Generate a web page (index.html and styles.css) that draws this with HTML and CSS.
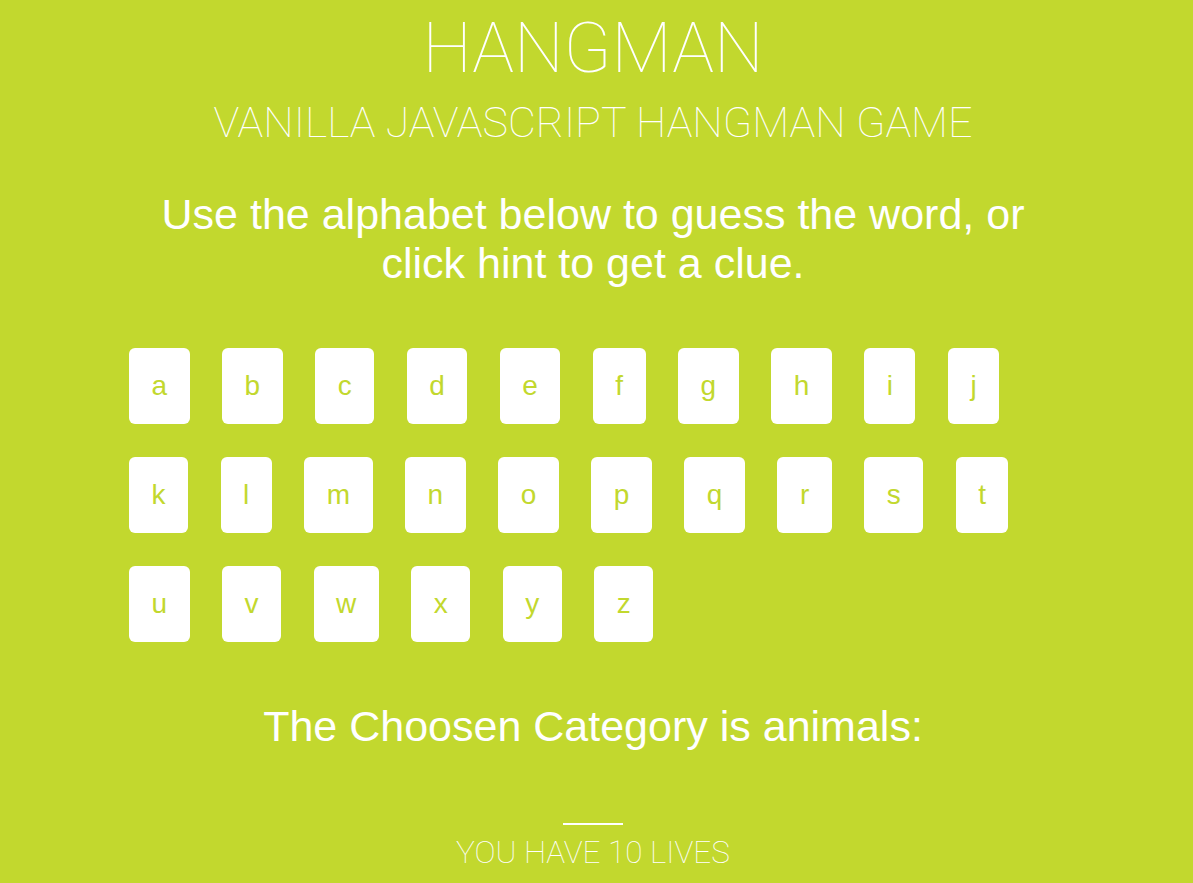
FILE: index.html
```html
<!DOCTYPE html>
<html lang="en">
<head>
<meta charset="utf-8">
<title>Hangman</title>
<link rel="stylesheet" href="styles.css">
</head>
<body>
<div class="wrapper">
  <h1 class="title">HANGMAN</h1>
  <h2 class="subtitle">VANILLA JAVASCRIPT HANGMAN GAME</h2>
  <p class="intro">Use the alphabet below to guess the word, or<br>click hint to get a clue.</p>
  <ul class="alphabet">
    <li class="key">a</li><li class="key">b</li><li class="key">c</li><li class="key">d</li><li class="key">e</li><li class="key">f</li><li class="key">g</li><li class="key">h</li><li class="key">i</li><li class="key">j</li>
    <li class="key">k</li><li class="key">l</li><li class="key">m</li><li class="key">n</li><li class="key">o</li><li class="key">p</li><li class="key">q</li><li class="key">r</li><li class="key">s</li><li class="key">t</li>
    <li class="key">u</li><li class="key">v</li><li class="key">w</li><li class="key">x</li><li class="key">y</li><li class="key">z</li>
  </ul>
  <p class="category">The Choosen Category is animals:</p>
  <div class="word"><span class="blank"></span></div>
  <p class="lives">YOU HAVE 10 LIVES</p>
</div>
</body>
</html>
```

FILE: styles.css
```css
html, body {
  margin: 0;
  padding: 0;
  background: #c2d82e;
}
body {
  font-family: "Liberation Sans", Arial, sans-serif;
  color: #ffffff;
}
.wrapper {
  width: 1186px;
  text-align: center;
}
.title {
  margin: 0;
  padding-top: 8px;
  font-family: Roboto, "Liberation Sans", sans-serif;
  font-weight: 100;
  font-size: 70px;
  line-height: 80px;
}
.subtitle {
  margin: 10px 0 0;
  font-family: Roboto, "Liberation Sans", sans-serif;
  font-weight: 100;
  font-size: 43px;
  line-height: 48px;
}
.intro {
  margin: 44px 0 0;
  font-size: 43px;
  line-height: 49px;
}
.alphabet {
  list-style: none;
  margin: 60px auto 0;
  padding: 0;
  width: 928px;
  display: flex;
  flex-wrap: wrap;
  gap: 33px 32.5px;
}
.key {
  background: #ffffff;
  color: #c2d82e;
  font-size: 28px;
  line-height: 32px;
  padding: 22px 22.5px;
  border-radius: 6px;
}
.category {
  margin: 60px 0 0;
  font-size: 43px;
  line-height: 48px;
}
.word {
  margin-top: 73px;
  display: flex;
  justify-content: center;
}
.blank {
  width: 60px;
  height: 2px;
  background: #ffffff;
}
.lives {
  margin: 10px 0 0;
  font-family: Roboto, "Liberation Sans", sans-serif;
  font-weight: 100;
  font-size: 31.5px;
  line-height: 36px;
}
```
